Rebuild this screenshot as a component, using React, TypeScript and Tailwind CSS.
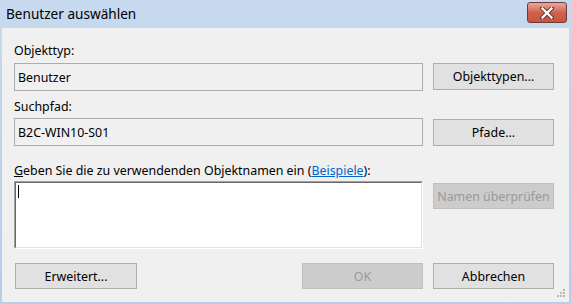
import React from "react";

const font = { fontFamily: '"Noto Sans", "Open Sans", sans-serif' };

function Btn({ children, disabled, className = "" }: { children: React.ReactNode; disabled?: boolean; className?: string }) {
  return (
    <div
      className={
        "flex items-center justify-center border text-[12.4px] " +
        (disabled
          ? "border-[#bfbfbf] bg-[#cccccc] text-[#9a9a9a] "
          : "border-[#adadad] bg-[#e1e1e1] text-black ") +
        className
      }
    >
      {children}
    </div>
  );
}

function ReadBox({ children }: { children: React.ReactNode }) {
  return (
    <div className="flex h-[28px] items-center border border-[#acacac] bg-[#f0f0f0] pl-[3px] text-[12.4px] text-black">
      {children}
    </div>
  );
}

export default function App() {
  return (
    <div
      className="flex h-[304px] w-[571px] flex-col bg-gradient-to-b from-[#c7daef] via-[#bcd3eb] to-[#b6cfea]"
      style={font}
    >
      {/* title bar */}
      <div className="relative flex h-[28px] items-center pl-[6px] pb-[1px]">
        <span className="text-[13.6px] leading-none text-black">Benutzer auswählen</span>
        <div className="absolute left-[527px] top-[2px] flex h-[21px] w-[40px] items-center justify-center rounded-[3px] border border-[#6e3a35] bg-gradient-to-b from-[#e9a99b] via-[#d0614e] to-[#c8543f]">
          <svg width="14" height="12" viewBox="0 0 14 12">
            <path d="M2 1 L12 11 M12 1 L2 11" stroke="#5a2b25" strokeWidth="4" strokeLinecap="square" />
            <path d="M2.5 1.5 L11.5 10.5 M11.5 1.5 L2.5 10.5" stroke="#ffffff" strokeWidth="2.4" strokeLinecap="square" />
          </svg>
        </div>
      </div>

      {/* client */}
      <div className="relative mx-[2px] mb-[2px] flex-1 bg-[#f0f0f0] text-[12.4px] leading-[15px] text-black">
        <div className="grid grid-cols-[409px_121px] gap-x-[10px] pl-[12px] pt-[15px]">
          <div className="col-span-2">Objekttyp:</div>
          <div className="mt-[5px]">
            <ReadBox>Benutzer</ReadBox>
          </div>
          <Btn className="mt-[5px] h-[27px]">Objekttypen...</Btn>

          <div className="col-span-2 mt-[8px]">Suchpfad:</div>
          <div className="mt-[4px]">
            <ReadBox>B2C-WIN10-S01</ReadBox>
          </div>
          <Btn className="mt-[5px] h-[27px]">Pfade...</Btn>

          <div className="col-span-2 mt-[17px]">
            <span className="underline">G</span>eben Sie die zu verwendenden Objektnamen ein (
            <span className="text-[#0066cc] underline">Beispiele</span>):
          </div>
          <div className="mt-[3px] h-[68px] border border-t-[#a0a0a0] border-l-[#a0a0a0] border-r-white border-b-white">
            <div className="h-full border border-t-[#696969] border-l-[#696969] border-r-[#e3e3e3] border-b-[#e3e3e3] bg-white pl-[2px] pt-[2px]">
              <div className="h-[13px] w-[1px] bg-black" />
            </div>
          </div>
          <Btn disabled className="mt-[5px] h-[26px]">Namen überprüfen</Btn>
        </div>

        <div className="mt-[14px] flex pl-[13px]">
          <Btn className="h-[26px] w-[122px]">Erweitert...</Btn>
          <Btn disabled className="ml-[165px] h-[26px] w-[121px]">OK</Btn>
          <Btn className="ml-[10px] h-[26px] w-[121px]">Abbrechen</Btn>
        </div>

        {/* size grip */}
        <svg className="absolute bottom-[4px] right-[3px]" width="10" height="10" viewBox="0 0 10 10">
          {[
            [7, 1],
            [4, 4],
            [7, 4],
            [1, 7],
            [4, 7],
            [7, 7],
          ].map(([x, y], i) => (
            <rect key={i} x={x} y={y} width="2" height="2" fill="#b8b8b8" />
          ))}
        </svg>
      </div>
    </div>
  );
}
